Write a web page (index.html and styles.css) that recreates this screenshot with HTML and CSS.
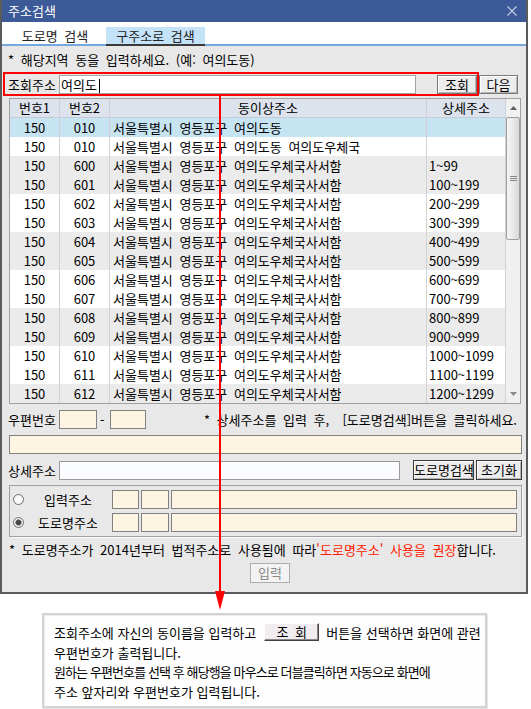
FILE: index.html
```html
<!DOCTYPE html>
<html lang="ko">
<head>
<meta charset="utf-8">
<title>주소검색</title>
<link rel="stylesheet" href="styles.css">
</head>
<body>
<div class="page">
  <div class="window">
    <div class="titlebar">
      <span class="title">주소검색</span>
      <svg class="close" width="10" height="10" viewBox="0 0 10 10"><path d="M0.5 0.5L9.5 9.5M9.5 0.5L0.5 9.5" stroke="#cfd6e6" stroke-width="1.1" fill="none"/></svg>
    </div>
    <div class="tabs">
      <div class="tab">도로명 검색</div>
      <div class="tab active">구주소로 검색</div>
    </div>
    <div class="body">
      <div class="hint">* 해당지역 동을 입력하세요. (예: 여의도동)</div>
      <div class="search-row">
        <div class="search-box">
          <span class="label">조회주소</span>
          <div class="input query">여의도<span class="caret"></span></div>
          <div class="btn btn-search">조회</div>
        </div>
        <div class="btn btn-next">다음</div>
      </div>

      <div class="table">
        <div class="grid">
          <div class="row head"><div class="c">번호1</div><div class="c">번호2</div><div class="c">동이상주소</div><div class="c">상세주소</div></div>
          <div class="row sel"><div class="c n">150</div><div class="c n">010</div><div class="c a">서울특별시 영등포구 여의도동</div><div class="c d"></div></div>
          <div class="row"><div class="c n">150</div><div class="c n">010</div><div class="c a">서울특별시 영등포구 여의도동 여의도우체국</div><div class="c d"></div></div>
          <div class="row alt"><div class="c n">150</div><div class="c n">600</div><div class="c a">서울특별시 영등포구 여의도우체국사서함</div><div class="c d">1~99</div></div>
          <div class="row alt"><div class="c n">150</div><div class="c n">601</div><div class="c a">서울특별시 영등포구 여의도우체국사서함</div><div class="c d">100~199</div></div>
          <div class="row"><div class="c n">150</div><div class="c n">602</div><div class="c a">서울특별시 영등포구 여의도우체국사서함</div><div class="c d">200~299</div></div>
          <div class="row"><div class="c n">150</div><div class="c n">603</div><div class="c a">서울특별시 영등포구 여의도우체국사서함</div><div class="c d">300~399</div></div>
          <div class="row alt"><div class="c n">150</div><div class="c n">604</div><div class="c a">서울특별시 영등포구 여의도우체국사서함</div><div class="c d">400~499</div></div>
          <div class="row alt"><div class="c n">150</div><div class="c n">605</div><div class="c a">서울특별시 영등포구 여의도우체국사서함</div><div class="c d">500~599</div></div>
          <div class="row"><div class="c n">150</div><div class="c n">606</div><div class="c a">서울특별시 영등포구 여의도우체국사서함</div><div class="c d">600~699</div></div>
          <div class="row"><div class="c n">150</div><div class="c n">607</div><div class="c a">서울특별시 영등포구 여의도우체국사서함</div><div class="c d">700~799</div></div>
          <div class="row alt"><div class="c n">150</div><div class="c n">608</div><div class="c a">서울특별시 영등포구 여의도우체국사서함</div><div class="c d">800~899</div></div>
          <div class="row alt"><div class="c n">150</div><div class="c n">609</div><div class="c a">서울특별시 영등포구 여의도우체국사서함</div><div class="c d">900~999</div></div>
          <div class="row"><div class="c n">150</div><div class="c n">610</div><div class="c a">서울특별시 영등포구 여의도우체국사서함</div><div class="c d">1000~1099</div></div>
          <div class="row"><div class="c n">150</div><div class="c n">611</div><div class="c a">서울특별시 영등포구 여의도우체국사서함</div><div class="c d">1100~1199</div></div>
          <div class="row alt"><div class="c n">150</div><div class="c n">612</div><div class="c a">서울특별시 영등포구 여의도우체국사서함</div><div class="c d">1200~1299</div></div>
        </div>
        <div class="scrollbar">
          <div class="sb-btn"><svg width="7" height="4" viewBox="0 0 7 4"><path d="M3.5 0L7 4H0Z" fill="#5f5f5f"/></svg></div>
          <div class="sb-track">
            <div class="sb-thumb"><svg width="7" height="5" viewBox="0 0 7 5"><path d="M0 0.5H7M0 2.5H7M0 4.5H7" stroke="#8a8a8a" stroke-width="1"/></svg></div>
          </div>
          <div class="sb-btn"><svg width="7" height="4" viewBox="0 0 7 4"><path d="M0 0H7L3.5 4Z" fill="#8a8a8a"/></svg></div>
        </div>
      </div>

      <div class="zip-row">
        <span class="label">우편번호</span>
        <div class="cream zip1"></div>
        <span class="dash">-</span>
        <div class="cream zip2"></div>
        <span class="zip-hint">* 상세주소를 입력 후,&nbsp; [도로명검색]버튼을 클릭하세요.</span>
      </div>
      <div class="cream long"></div>

      <div class="detail-row">
        <span class="label">상세주소</span>
        <div class="input detail"></div>
        <div class="btn btn-dark btn-road">도로명검색</div>
        <div class="btn btn-dark btn-reset">초기화</div>
      </div>

      <div class="group">
        <div class="g-row">
          <span class="radio"></span>
          <span class="g-label">입력주소</span>
          <div class="cream gb1"></div>
          <div class="cream gb2"></div>
          <div class="cream gb3"></div>
        </div>
        <div class="g-row">
          <span class="radio checked"></span>
          <span class="g-label">도로명주소</span>
          <div class="cream gb1"></div>
          <div class="cream gb2"></div>
          <div class="cream gb3"></div>
        </div>
      </div>

      <div class="notice">* 도로명주소가 2014년부터 법적주소로 사용됨에 따라<span class="red">'도로명주소' 사용을 권장</span>합니다.</div>

      <div class="btn btn-disabled">입력</div>
    </div>
  </div>

  <svg class="arrow" width="12" height="516" viewBox="0 0 12 516"><path d="M6 0V498" stroke="#ff0000" stroke-width="2" fill="none"/><path d="M1 495H11L6 514Z" fill="#ff0000"/></svg>

  <div class="tooltip">
    <div class="tip-line">조회주소에 자신의 동이름을 입력하고<span class="tip-btn">조 회</span>버튼을 선택하면 화면에 관련</div>
    <div class="tip-line">우편번호가 출력됩니다.</div>
    <div class="tip-line tight">원하는 우편번호를 선택 후 해당행을 마우스로 더블클릭하면 자동으로 화면에</div>
    <div class="tip-line">주소 앞자리와 우편번호가 입력됩니다.</div>
  </div>
</div>
</body>
</html>
```

FILE: styles.css
```css
* { box-sizing: border-box; }
html, body { margin: 0; padding: 0; background: #ffffff; }
body {
  font-family: "Noto Sans CJK KR", sans-serif;
  font-size: 13px;
  word-spacing: 3px;
  color: #000;
}
.page { position: relative; width: 531px; height: 709px; overflow: hidden; }

.window {
  width: 528px;
  border: 2px solid #5b5b5b;
  border-top: 0;
  background: #e8e8e8;
}
.titlebar {
  height: 22px;
  background: #3c5a97;
  color: #fff;
  display: flex;
  align-items: center;
  justify-content: space-between;
  padding: 0 9px 0 6px;
}
.title { line-height: 22px; }
.close { display: block; }

.tabs {
  height: 24px;
  background: #fff;
  border-bottom: 2px solid #74a8de;
  display: flex;
  align-items: flex-end;
  padding-left: 8px;
}
.tab {
  width: 90px;
  height: 17px;
  line-height: 17px;
  text-align: center;
  color: #222;
}
.tab.active {
  width: 99px;
  height: 19px;
  margin-left: 6px;
  margin-bottom: -2px;
  background: #c4e2f8;
  border-bottom: 2px solid #3a3a3a;
}

.body { padding-bottom: 9px; }
.hint { margin: 6px 0 0 6px; line-height: 16px; height: 16px; white-space: nowrap; }

.search-row { display: flex; margin: 4px 0 0 1px; }
.search-box {
  display: flex;
  align-items: flex-end;
  width: 476px;
  height: 24px;
  border: 2px solid #ff0000;
  padding-left: 3px;
}
.label { display: block; width: 51px; line-height: 19px; flex: none; white-space: nowrap; }
.input {
  height: 19px;
  background: #fff;
  border: 1px solid #a3a3a3;
  line-height: 17px;
  padding-left: 1px;
  flex: none;
}
.query { width: 357px; }
.caret {
  display: inline-block;
  width: 1px;
  height: 14px;
  background: #000;
  margin-left: 2px;
  vertical-align: -3px;
}
.btn {
  height: 19px;
  line-height: 17px;
  text-align: center;
  background: #ececec;
  border: 1px solid #7a7a7a;
  box-shadow: inset 1px 1px #ffffff, inset -1px -1px #b4b4b4;
  flex: none;
  white-space: nowrap;
}
.btn-search { width: 40px; margin-left: 21px; }
.btn-next { width: 39px; margin-top: 3px; }

.table {
  display: flex;
  width: 512px;
  height: 306px;
  margin: 2px 0 0 7px;
  border: 1px solid #a0a0a0;
  background: #fff;
}
.grid { width: 496px; }
.row {
  display: grid;
  grid-template-columns: 50px 50px 317px 79px;
  height: 19px;
  line-height: 19px;
  background: #fff;
}
.row.head {
  height: 19px;
  line-height: 18px;
  background: #dce3ec;
  border-bottom: 1px solid #c4cbd4;
}
.row.head .c { text-align: center; border-right-color: #c9d0d8; }
.row.sel { background: #c7e4f2; }
.row.alt { background: #ebebeb; }
.c {
  border-right: 1px solid #d2d2d2;
  white-space: nowrap;
  overflow: hidden;
}
.c.n { text-align: center; }
.c.a { padding-left: 3px; }
.c.d { padding-left: 2px; }

.scrollbar {
  width: 14px;
  display: flex;
  flex-direction: column;
  background: #f0f0f0;
}
.sb-btn {
  height: 18px;
  display: flex;
  align-items: center;
  justify-content: center;
  flex: none;
}
.sb-btn svg { display: block; }
.sb-track { flex: 1; }
.sb-thumb {
  height: 123px;
  border: 1px solid #9e9e9e;
  border-radius: 2px;
  background: linear-gradient(to right, #f5f5f5, #e8e8e8 50%, #d8d8d8);
  display: flex;
  align-items: center;
  justify-content: center;
}
.sb-thumb svg { display: block; }

.cream {
  height: 19px;
  background: #fdf4e2;
  border: 1px solid #808080;
  flex: none;
}
.zip-row {
  display: flex;
  align-items: center;
  height: 19px;
  margin-top: 6px;
  padding: 0 9px 0 6px;
}
.zip1 { width: 38px; }
.zip2 { width: 36px; }
.dash { width: 6px; margin: 0 4px 0 3px; line-height: 19px; }
.zip-hint { margin-left: auto; line-height: 19px; white-space: nowrap; }
.long { width: 513px; margin: 6px 0 0 7px; }

.detail-row {
  display: flex;
  align-items: center;
  height: 20px;
  margin-top: 6px;
  padding-left: 6px;
}
.detail { width: 341px; background: #fbfcff; border-color: #9a9a9a; }
.btn-dark {
  height: 20px;
  line-height: 18px;
  border-color: #3a3a3a;
  word-spacing: 0;
}
.btn-road { width: 61px; margin-left: 13px; }
.btn-reset { width: 46px; margin-left: 2px; }

.group {
  width: 513px;
  margin: 5px 0 0 7px;
  border: 1px solid #a0a0a0;
  box-shadow: 1px 1px 0 #f8f8f8;
  padding: 4px 4px 4px 3px;
  display: flex;
  flex-direction: column;
  gap: 4px;
}
.g-row { display: flex; align-items: center; height: 19px; }
.radio {
  width: 11px;
  height: 11px;
  border-radius: 50%;
  border: 1px solid #6f6f6f;
  background: radial-gradient(circle, #ffffff 0, #f2f2f2 70%, #dedede 100%);
  flex: none;
}
.radio.checked {
  background: radial-gradient(circle, #3f3f3f 0, #4a4a4a 2.2px, #9a9a9a 3px, #f4f4f4 3.6px, #e0e0e0 100%);
}
.g-label { width: 88px; text-align: center; line-height: 19px; flex: none; }
.gb1 { width: 27px; }
.gb2 { width: 28px; margin-left: 2px; }
.gb3 { width: 346px; margin-left: 2px; }

.notice { margin: 6px 0 0 7px; line-height: 14px; white-space: nowrap; }
.red { color: #ff1a00; }

.btn-disabled {
  width: 40px;
  height: 20px;
  line-height: 18px;
  margin: 6px 0 0 248px;
  background: #f3f3f3;
  border: 1px solid #adadad;
  box-shadow: none;
  color: #8a8a8a;
}

.arrow { position: absolute; left: 214px; top: 96px; display: block; }

.tooltip {
  width: 445px;
  height: 95px;
  margin: 19px 0 0 42px;
  border: 2px solid #d3d3d3;
  box-shadow: inset 1px 1px #ececec, 1px 1px 0 #e6e6e6;
  background: #fefefe;
  padding: 8px 2px 0 10px;
  font-size: 13px;
  word-spacing: 0;
}
.tip-line { line-height: 19.7px; height: 19.7px; white-space: nowrap; }
.tip-line.tight { letter-spacing: -0.9px; }
.tip-btn {
  display: inline-block;
  width: 55px;
  height: 18px;
  line-height: 16px;
  margin: 0 7px 0 8px;
  vertical-align: top;
  text-align: center;
  background: #f0ecf0;
  border: 1px solid;
  border-color: #ffffff #404040 #404040 #ffffff;
  box-shadow: inset -1px -1px #8a8a8a;
  word-spacing: 3px;
}
```
